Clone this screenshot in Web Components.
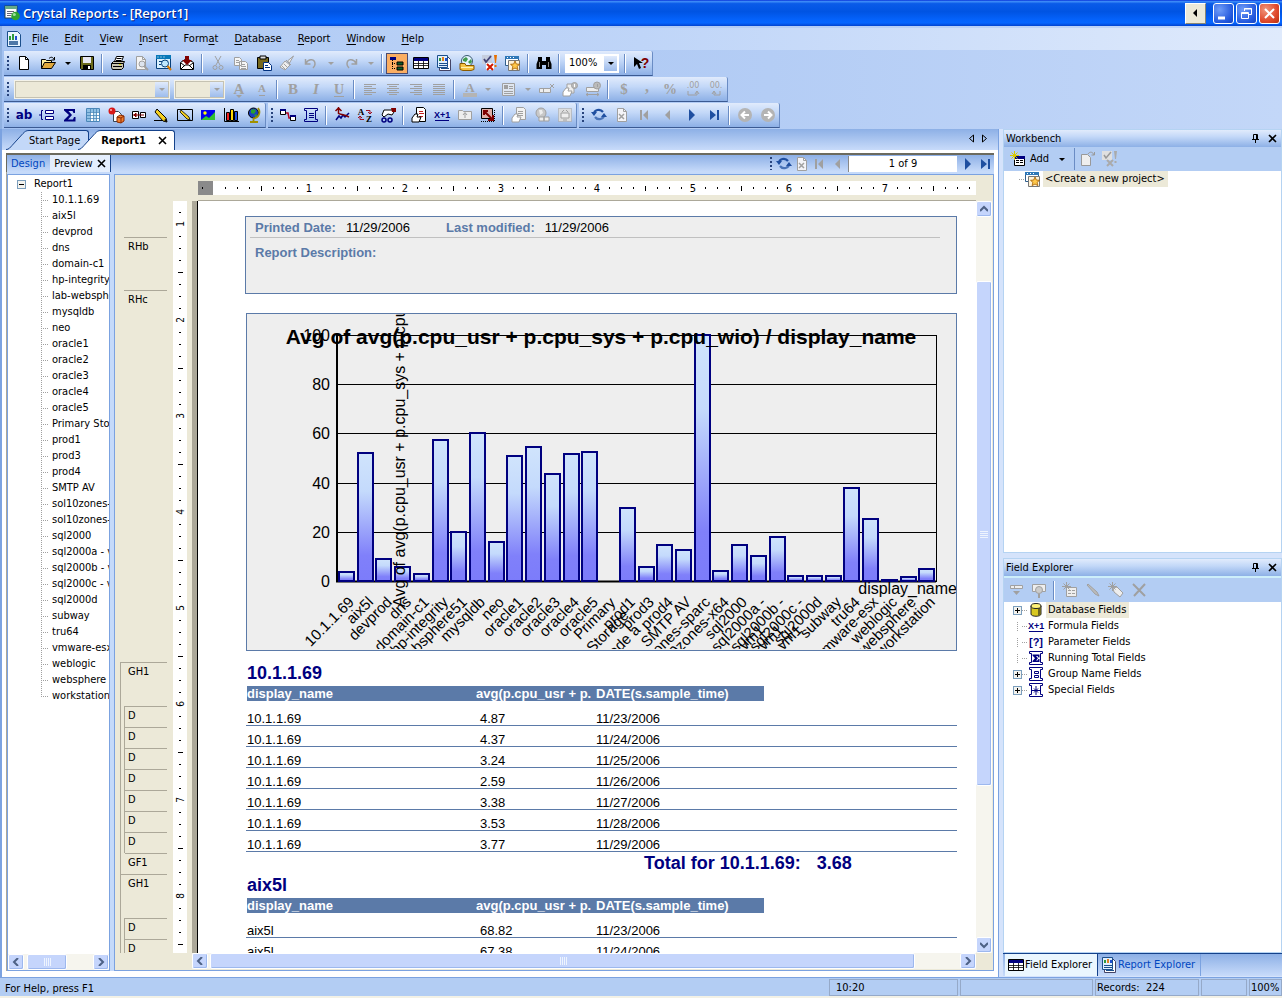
<!DOCTYPE html>
<html lang="en">
<head>
<meta charset="utf-8">
<title>Crystal Reports - [Report1]</title>
<style>
	html, body {
		height: 100%;
		margin: 0;
	}
	body {
		--navy: #00007f;
		--steel: #5b7aa8;
		--face: #ece9d8;
		--shadow: #aca899;
		--base: #b3cdf3;
		--edge: #7ba2e0;
		--dark: #15428b;
		--bar: linear-gradient(#e1ebfc, #c3d8f8 40%, #8db0e6);
		--strip: linear-gradient(#8db0e6, #c8dbfa);
		font: 11px/16px "DejaVu Sans Condensed", "Noto Sans", sans-serif;
		color: #000;
		overflow: hidden;
	}
</style>
</head>
<body>
<report-app></report-app>

<script>
const page = (fill, line) => `<path d="M3.5 1.5h6l3 3v10h-9z" fill="${fill}" stroke="${line}"/><path d="M9.5 1.5v3h3" fill="none" stroke="${line}"/>`
const lines = (rows, color) => rows.map(([x, y, w]) => `<rect x="${x}" y="${y}" width="${w}" height="1" fill="${color}"/>`).join('')
const letter = (text, color, size = 13, extra = '') => `<text x="8" y="13" text-anchor="middle" font-family="Liberation Serif, serif" font-weight="bold" font-size="${size}" fill="${color}" ${extra}>${text}</text>`
const G = '#a0a0a0'
const N = '#00007f'
const B = '#1f4fa0'
const scroll = `<path d="M3.5 3.500h-2v-2h13v2h-2M3.500 3.500v9M12.500 3.500v9M3.500 12.500h-2v2h13v-2h-2" fill="none" stroke="${N}"/>`
const hand = color => `<path d="M1 15v-4l3-4 3 0-1 3h4l-2 5z" fill="#fff" stroke="${color}"/>`
const spark = color => `<path d="M4.500 0v9M0 4.500h9M1.500 1.500l6 6M7.500 1.500l-6 6" stroke="${color}"/>`
const star = '<path d="M10 6l1.300 3 3.200.3-2.400 2.100.8 3.200L10 13l-2.900 1.600.8-3.200L5.500 9.300l3.200-.3z" fill="#ffc84a" stroke="#a05a00" stroke-width=".8"/>'

const icons = {
	app: '<rect x="1" y="1" width="12" height="12" fill="#fff" stroke="#245"/><rect x="1" y="1" width="12" height="3" fill="#6a8"/><path d="M3 6.500h7M3 8.500h5M3 10.500h4" stroke="#667"/><circle cx="11.500" cy="11" r="4.300" fill="#2fa32f"/><circle cx="10.300" cy="9.600" r="1.500" fill="#9fe09f"/>',
	menudoc: '<path d="M1.500.5h10l3 3v12h-13z" fill="#e8f4ff" stroke="#1b4f8c"/><path d="M3 9h2V5H3z" fill="#2f9a3f"/><path d="M6 9h2V3H6z" fill="#2f9a3f"/><path d="M9 9h2V5H9z" fill="#1f4fd0"/><path d="M3 11h9M3 13h9" stroke="#1b4f8c" stroke-width="1.400"/>',
	new: page('#fff', '#000'),
	open: '<path d="M1.500 13.500v-9h4l1 1h5v2" fill="#fff0a0" stroke="#000"/><path d="M1.500 13.500l3-6h11l-4 6z" fill="#e0a83c" stroke="#000"/><path d="M9 3.500c2-2 4-1.500 5 1M14.500 2v3h-3" fill="none" stroke="#000"/>',
	save: '<path d="M1.500 1.500h13v13h-12l-1-1z" fill="#6b6b1c" stroke="#000"/><path d="M4 2h8v6H4z" fill="#e8e8f4"/><path d="M4 10h8v5H4z" fill="#000"/><path d="M9 11h2v3H9z" fill="#fff"/>',
	print: '<path d="M4.500 6.500l2-5h7l-2 5z" fill="#fff" stroke="#000"/><path d="M6.500 3.500h5M6 5.500h5" stroke="#000"/><path d="M1.500 8.500l2-2h11l-1 2v4l-2 2h-9l-1-2z" fill="#c8c4b0" stroke="#000"/><path d="M1.500 8.500h12M3 11.500h9" stroke="#000"/><path d="M9 9.500h2" stroke="#dd0"/>',
	preview: page('#f4f4f4', G) + `<circle cx="9" cy="9" r="3" fill="#dde4ee" stroke="${G}"/><path d="M11 11l4 4" stroke="${G}" stroke-width="2"/>`,
	htmlprev: '<path d="M.5.5h14v13H.5z" fill="#d8f0ff" stroke="#06407c"/><path d="M0 0h15v4H0z" fill="#0878b8"/><path d="M1.500 2h1m2 0h1m2 0h1" stroke="#fff"/><path d="M3 6.500h3M3 9.500h2" stroke="#06407c"/><circle cx="9" cy="8.500" r="3.500" fill="#bfe8ff" stroke="#06407c"/><path d="M11.500 11l3.500 4" stroke="#d87800" stroke-width="2"/>',
	export: '<path d="M1.500 7.500l6-4 7 4v7h-13z" fill="#fff" stroke="#000"/><path d="M2 14l4-4h4l4 4M2 8l4 3M14 8l-4 3" fill="none" stroke="#000"/><path d="M6 1h4v4h3l-5 5-5-5h3z" fill="#800000"/>',
	cut: `<path d="M5 1l5 9M11 1l-5 9" stroke="${G}"/><circle cx="5" cy="12.500" r="2" fill="none" stroke="${G}"/><circle cx="11" cy="12.500" r="2" fill="none" stroke="${G}"/>`,
	copy: `<path d="M1.500 2.500h5l2 2v6h-7zM6.500 6.500h6l2 2v6h-8z" fill="#f6f6f6" stroke="${G}"/>` + lines([[3, 5, 3], [3, 7, 3], [8, 9, 4], [8, 11, 5], [8, 13, 5]], G),
	paste: '<path d="M1.500 2.500h11v11h-11z" fill="#76681c" stroke="#000"/><path d="M4 1h6v3H4z" fill="#ddd" stroke="#000"/><path d="M7.500 7.500h5l3 3v5h-8z" fill="#fff" stroke="#00307f"/>' + lines([[9, 10, 3], [9, 12, 5]], '#00307f'),
	brush: `<path d="M14.500 1l-6 5 2 2zM7 5l5 5M6 6l-5 6 5 3 5-5z" fill="#eee" stroke="${G}"/><path d="M3 11l3 3M5 9l3 3" stroke="${G}"/>`,
	undo: `<path d="M2.500 4v5h5M3 8c3-5 9-4 9 1 0 2-1 3-2 4" fill="none" stroke="${G}" stroke-width="1.500"/>`,
	redo: `<path d="M13.500 4v5h-5M13 8c-3-5-9-4-9 1 0 2 1 3 2 4" fill="none" stroke="${G}" stroke-width="1.500"/>`,
	tree: `<path d="M1 2h6v3H1z" fill="${N}"/><path d="M3.500 5v9M3 8.500h4M3 13.500h4" stroke="#000" fill="none" stroke-dasharray="1 1"/><path d="M8 7h6v3H8zM8 12h6v3H8z" fill="#0a5c2c" stroke="#000"/>`,
	table: `<path d="M.5 2.500h15v11H.5z" fill="#fff" stroke="#000"/><path d="M1 3h14v3H1z" fill="${N}"/><path d="M1 8.500h14M1 10.500h14M5.500 6v8M10.500 6v8" stroke="#000" stroke-width=".8"/>`,
	report: '<path d="M3.500 1.500h8l3 3v11h-11z" fill="#fff" stroke="#446"/><path d="M1.500.5h10v12h-10z" fill="#dff0ff" stroke="#1b4f8c"/><path d="M3 6h2V3H3z" fill="#2f9a3f"/><path d="M6 6h2V2H6z" fill="#e08020"/><path d="M9 6h2V3H9z" fill="#1f4fd0"/><path d="M3 8.500h8M3 10.500h8M5 13.500h8" stroke="#1b4f8c"/>',
	globe: '<circle cx="8" cy="6" r="5.500" fill="#e4f4ff" stroke="#3a5a70"/><path d="M4 4l3-2 2 2-2 3-3-1zM9 7l3-3 1 3-2 2z" fill="#3f9a4f"/><path d="M1 8.500h5l1 2h8v4l-3 1H4l-3-1z" fill="#f5c343" stroke="#8a5a00"/><path d="M2 12.500h12" stroke="#fff2b0"/>',
	check: '<path d="M0 0h10v9H0z" fill="#c6cede"/><path d="M2 4l2 3 5-6" fill="none" stroke="#447" stroke-width="1.800"/><path d="M4 8h8v7H4z" fill="#fff"/><path d="M5 9l6 6m0-6l-6 6" stroke="#d01800" stroke-width="2"/><path d="M12 0h3l-1 8h-1zM12.500 10h2v2h-2z" fill="#e87000"/>',
	favreport: '<path d="M.5 1.500h13v9H.5z" fill="#fff" stroke="#315f8c"/><path d="M0 1h14v3H0z" fill="#2f78b8"/><path d="M2 2.500h1m2 0h1m2 0h1" stroke="#fff"/><path d="M3.500 5.500h11v10h-11z" fill="#fff3d8" stroke="#777"/>' + star,
	binoc: '<path d="M2 2h4v4h4V2h4v3l1.500 4v5H10v-4H6v4H.5V9L2 5z" fill="#000"/><path d="M3.500 7v5M12.500 7v5" stroke="#8a8a8a"/>',
	help: '<path d="M1 2v10l3-3 2 5 2-1-2-5h4z" fill="#000"/>' + '<text x="12" y="13" text-anchor="middle" font-family="Liberation Sans, sans-serif" font-weight="bold" font-size="14" fill="#800000">?</text>',
	grow: letter('A', G, 15) + `<path d="M5 14h6l-3 3z" fill="${G}"/>`,
	shrink: `<text x="8" y="11" text-anchor="middle" font-family="Liberation Serif, serif" font-weight="bold" font-size="11" fill="${G}">A</text><path d="M5 14.500h6" stroke="${G}"/>`,
	bold: letter('B', G, 15),
	italic: letter('I', G, 15, 'font-style="italic"'),
	under: letter('U', G, 14) + `<path d="M3 15.500h10" stroke="${G}"/>`,
	left: lines([[2, 3, 12], [2, 5, 8], [2, 7, 12], [2, 9, 8], [2, 11, 12], [2, 13, 8]], G),
	center: lines([[2, 3, 12], [4, 5, 8], [2, 7, 12], [4, 9, 8], [2, 11, 12], [4, 13, 8]], G),
	right: lines([[2, 3, 12], [6, 5, 8], [2, 7, 12], [6, 9, 8], [2, 11, 12], [6, 13, 8]], G),
	justify: lines([[2, 3, 12], [2, 5, 12], [2, 7, 12], [2, 9, 12], [2, 11, 12], [2, 13, 12]], G),
	fontcolor: `<text x="8" y="11" text-anchor="middle" font-family="Liberation Serif, serif" font-weight="bold" font-size="13" fill="${G}">A</text><path d="M1 12h14v4H1z" fill="#b4b4b4"/>`,
	box: `<path d="M2.500 2.500h12v12h-12z" fill="#dfe6f0" stroke="${G}"/><path d="M4 4h4v4H4z" fill="${G}"/>` + lines([[9, 5, 4], [9, 7, 4], [4, 10, 9], [4, 12, 9]], G),
	suppress: `<path d="M.5 7.500h11v4H.5z" fill="#eee" stroke="${G}"/><path d="M11 3l4 4m0-4l-4 4M4.500 8v3" stroke="${G}"/>`,
	lockformat: `<path d="M5 3h7v9H5z" fill="#eee" stroke="${G}"/>${hand(G)}<circle cx="12.500" cy="4.500" r="3" fill="#bbb" stroke="${G}"/><path d="M12.500 3v3" stroke="#fff"/>`,
	locksize: `<path d="M1.500 6.500h12v4h-12z" fill="#eee" stroke="${G}"/><circle cx="12" cy="4.500" r="3.500" fill="#bbb" stroke="${G}"/><path d="M1 13.500h13M3 12l-2 1.500 2 1.500M12 12l2 1.500-2 1.500M12.500 3v3" stroke="${G}" fill="none"/>`,
	currency: letter('$', G, 15),
	thousands: `<text x="8" y="11" text-anchor="middle" font-family="Liberation Serif, serif" font-weight="bold" font-size="16" fill="${G}">,</text>`,
	percent: letter('%', G, 14),
	moredec: `<text x="8" y="7" text-anchor="middle" font-family="DejaVu Sans, sans-serif" font-size="8" fill="${G}">.00</text><path d="M3 10v4h9v-3M10 13l2-3 2 3" stroke="${G}" fill="none"/>`,
	lessdec: `<text x="8" y="7" text-anchor="middle" font-family="DejaVu Sans, sans-serif" font-size="8" fill="${G}">00.</text><path d="M12 10v4H6v-3M4 13l2-3 2 3" stroke="${G}" fill="none"/>`,
	textobj: `<text x="8" y="12" text-anchor="middle" font-family="DejaVu Sans, sans-serif" font-weight="bold" font-size="12" fill="${N}">ab</text>`,
	group: `<path d="M6.500 3.500h8v3h-8zM6.500 9.500h8v3h-8z" fill="#fff" stroke="${N}"/><path d="M4 3.500H2.500v9H4M2 8H0" fill="none" stroke="${N}"/>`,
	sigma: `<path d="M2 2h11v4h-1.500L10.500 4H6.500l3.500 4-4 4.500h5L12 10h1.500v4.500H2V13l5-5-5-4.500z" fill="${N}"/>`,
	crosstab: '<path d="M1.500 1.500h13v13h-13z" fill="#fff" stroke="#4a86b8"/><path d="M2 2h12v3H2zM2 2h3v12H2z" fill="#8fc0e4"/><path d="M9 5h3v9H9z" fill="#bfe0f4"/><path d="M2 5.500h12M2 8.500h12M2 11.500h12M5.500 2v12M8.500 2v12M11.500 2v12" stroke="#4a86b8" stroke-width=".8"/>',
	olap: '<path d="M5.500 4.500h5l3 3v7h-8z" fill="#fff" stroke="#345"/><circle cx="4" cy="4" r="3.500" fill="#d81818"/><circle cx="3" cy="3" r="1" fill="#ffb0b0"/><path d="M9 10l3-2 4 1v5l-3 2-4-1z" fill="#f08030" stroke="#8a2800"/><path d="M9 10l4 1 3-2M13 11v5" stroke="#8a2800" fill="none"/>',
	subreport: '<path d="M1.500 4.500h6v7h-6zM9.500 5.500h5v5h-5z" fill="#fff" stroke="#000"/><path d="M2 8h11M5 6L3 8l2 2z" stroke="#800000" fill="#800000"/>',
	line: '<path d="M0 13.500h8" stroke="#000"/><path d="M3 2l9 9 1 4-4-1-8-9z" fill="#f5d020" stroke="#000"/><path d="M10 13l3 2-1-3z" fill="#000"/>',
	boxpen: '<path d="M.5 2.500h15v11H.5z" fill="none" stroke="#000"/><path d="M4 3l8 7 1 3-3-1-7-7z" fill="#f5d020" stroke="#000" stroke-width=".8"/>',
	picture: '<path d="M1 3h14v10H1z" fill="#0000f0"/><path d="M1 13l5-4 3 2 6-6v8z" fill="#30c030"/><circle cx="5" cy="6" r="1.700" fill="#ff0"/>',
	chart: '<path d="M1.500 1v13.500H16" fill="none" stroke="#000"/><path d="M3.500 5.500h3v8h-3z" fill="#f02020" stroke="#000"/><path d="M7.500 2.500h3v11h-3z" fill="#ffd800" stroke="#000"/><path d="M11.500 4.500h3v9h-3z" fill="#2050e0" stroke="#000"/>',
	map: '<circle cx="7.500" cy="6" r="5" fill="#1a3fc0" stroke="#000"/><path d="M5 3l3-1 2 2-2 3-3-1zM8 8l3-1-1 3z" fill="#28a030"/><path d="M12 1c3 4 1 10-5 10.500M7.500 12v2M4 15h8" stroke="#a09000" stroke-width="1.800" fill="none"/>',
	dblink: `<path d="M.5 2.500h5v5h-5zM10.500 8.500h5v5h-5z" fill="#fff" stroke="#000"/><path d="M0 2h6v2H0zM10 8h6v2h-6z" fill="${N}"/><path d="M6 6h2l1 5h1" stroke="#b00020" fill="none" stroke-width="1.500"/>`,
	section: scroll + lines([[6, 6, 5], [6, 8, 5], [6, 10, 5]], N),
	trend: `<path d="M2 13l3-4 2 2 2-3 2 2 4-4" stroke="${N}" stroke-width="1.500" fill="none"/><path d="M4.500 0v6M1.500 4l3-3 3 3M4 6c2 2 5 1 11 4" stroke="#800000" stroke-width="1.500" fill="none"/>`,
	sort: '<text x="4" y="8" text-anchor="middle" font-family="Liberation Serif, serif" font-weight="bold" font-size="9">A</text><text x="12" y="15" text-anchor="middle" font-family="Liberation Serif, serif" font-weight="bold" font-size="9">Z</text><path d="M9 3.500h4v3M11 5l2 2 2-2M7 12.500H3v-3M1 11l2-2 2 2" stroke="#a01020" fill="none"/>',
	groupsort: `<path d="M4 3h8l2 2-2 3-4-1-4 3-2-2z" fill="#fff" stroke="#000"/><path d="M11 1h5v4h-4z" fill="#800000"/><circle cx="4" cy="13" r="2" fill="none" stroke="${N}" stroke-width="1.500"/><circle cx="10" cy="13" r="2" fill="none" stroke="${N}" stroke-width="1.500"/>`,
	template: '<path d="M5.500.5h7l2 2v12h-9z" fill="#fff" stroke="#000"/>' + lines([[8, 4, 4], [8, 6, 5], [8, 9, 4]], '#c02020') + hand('#000'),
	formula: `<text x="8" y="11" text-anchor="middle" font-family="Liberation Sans, sans-serif" font-weight="bold" font-size="9" fill="${N}">X+1</text><path d="M1 13.500h14" stroke="${N}"/>`,
	folderup: `<path d="M1.500 12.500v-9h4l1 1h8v8z" fill="#eee" stroke="${G}"/><path d="M8 11V6M6 8l2-2.500L10 8" stroke="${G}" fill="none"/>`,
	arrowbox: '<path d="M1.500 1.500h11v10h-11z" fill="#e0b0a8" stroke="#000"/><path d="M4 4l8 8M4 8V4h4M13 8v5H8" stroke="#800000" stroke-width="2" fill="none"/><path d="M1 14.500h13M14.500 3v11" stroke="#000" stroke-dasharray="1 1"/>',
	handdoc: `<path d="M5.500.5h7l2 2v10h-9z" fill="#f2f2f2" stroke="${G}"/>` + lines([[7, 4, 5], [7, 6, 5], [7, 8, 5]], G) + hand(G),
	weblink: `<circle cx="7" cy="6" r="5" fill="#c8c8c8" stroke="${G}"/><path d="M5 3l3 0 1 3-3 2z" fill="#eee"/><path d="M5 10h5v4H5zM10 10h5v4h-5z" fill="#eee" stroke="${G}"/>`,
	dotsel: `<path d="M1.500 1.500h13v13h-13z" fill="#ddd" stroke="${G}" stroke-dasharray="1 1"/><path d="M4 6h8v5H4zM7 3l-2 2M9 3l2 2M6 13h4" stroke="${G}" fill="#eee"/>`,
	refresh: `<path d="M3 7c0-4 6-6 9-2" fill="none" stroke="${B}" stroke-width="2.200"/><path d="M13 8c0 4-6 6-9 2" fill="none" stroke="#4a74b8" stroke-width="2.200"/><path d="M0 5h6L3 9zM16 10h-6l3-4z" fill="${B}"/>`,
	stop: page('#f4f4f8', G) + `<path d="M5 7l5 5m0-5l-5 5" stroke="${G}" stroke-width="1.500"/>`,
	first: `<path d="M3 3h2v10H3zM11 3v10L6 8z" fill="${G}"/>`,
	prev: `<path d="M10 3v10L5 8z" fill="${G}"/>`,
	next: `<path d="M6 2v12l6-6z" fill="${B}"/>`,
	last: `<path d="M11 3h2v10h-2zM4 3v10l6-5z" fill="${B}"/>`,
	back: '<circle cx="8" cy="8" r="7" fill="#b4b4b4"/><path d="M12 8H5M8 4.500L4.500 8 8 11.500" stroke="#fff" stroke-width="2" fill="none"/>',
	forward: '<circle cx="8" cy="8" r="7" fill="#b4b4b4"/><path d="M4 8h7M8 4.500l3.500 3.500L8 11.500" stroke="#fff" stroke-width="2" fill="none"/>',
	add: '<path d="M4.500 5.500h10v9h-10z" fill="#fff" stroke="#000"/><path d="M4 5h11v3H4z" fill="#00007f"/>' + lines([[6, 9, 3], [10, 9, 3], [6, 11, 3], [10, 11, 3]], '#000') + spark('#d8c800'),
	newitem: '<path d="M2.500 3.500h6l3 3v8h-9z" fill="#eee" stroke="#999"/><path d="M9 3c2-3 5-2 6 1M15.500 1v3h-3" fill="none" stroke="#999"/>',
	checkgray: '<path d="M0 0h10v9H0z" fill="#e0e0e0"/><path d="M2 4l2 3 5-6" fill="none" stroke="#999" stroke-width="1.500"/><path d="M5 9l6 6m0-6l-6 6" stroke="#aaa" stroke-width="2"/><path d="M12 0h3l-1 8h-1zM12.500 10h2v2h-2z" fill="#aaa"/>',
	insfield: `<path d="M2.500 3.500h12v3h-12zM6.500 4v2" fill="#eee" stroke="${G}"/><path d="M5 9h7l-3.500 4z" fill="${G}"/>`,
	browse: `<path d="M1.500 2.500h13v7h-13z" fill="#eee" stroke="${G}"/><circle cx="8" cy="8" r="3.500" fill="#ccc" stroke="${G}"/><path d="M8 12v4" stroke="${G}" stroke-width="2"/>`,
	newfield: `<path d="M4.500 5.500h10v9h-10z" fill="#eee" stroke="${G}"/>` + lines([[6, 8, 3], [10, 8, 3], [6, 11, 3], [10, 11, 3]], G) + spark(G),
	edit: `<path d="M3 2l9 8 2 4-4-2-8-9z" fill="#bbb" stroke="${G}"/>`,
	rename: `<path d="M5 6l4-1 6 6-3 4-6-5z" fill="#eee" stroke="${G}"/>` + spark(G),
	delete: `<path d="M2 2l12 12M14 2L3 14" stroke="${G}" stroke-width="2"/>`,
	database: '<path d="M3 4v8c0 3 10 3 10 0V4z" fill="#d8c820" stroke="#222"/><path d="M10 6v8l3-2V4z" fill="#6b6420"/><ellipse cx="8" cy="4" rx="5" ry="2.500" fill="#fff27a" stroke="#222"/>',
	param: `<text x="8" y="12" text-anchor="middle" font-family="Liberation Sans, sans-serif" font-weight="bold" font-size="11" fill="${N}">[?]</text>`,
	runtotal: scroll + `<path d="M4.500 4.500h7v3h-1l-1-1.500H8l2 2.200L8 10.500h1.500l1-1.500h1v3h-7v-1l2.500-2.800L4.500 5.500z" fill="${N}"/>`,
	groupname: scroll + `<path d="M6.500 5.500h4v2h-4zM6.500 9.500h4v2h-4z" fill="#fff" stroke="${N}"/>`,
	special: scroll + `<path d="M8 4v9M4 8.500h8M6 6.500l4 4M10 6.500l-4 4" stroke="${N}" fill="none"/>`
}

/* shared base: shadow root, styles and markup in one go */
class Part extends HTMLElement {
	connectedCallback() {
		if (this.shadowRoot) return
		this.attachShadow({ mode: 'open' }).innerHTML = `
			<style>
				:host { display: block; box-sizing: border-box; }
				*, ::before, ::after { box-sizing: border-box; }
				button, input, select { font: inherit; color: inherit; margin: 0; padding: 0; border: 0; background: none; border-radius: 0; }
				ul { list-style: none; margin: 0; padding: 0; }
				${this.css()}
			</style>${this.html()}`
	}
	css() { return '' }
	html() { return '<slot></slot>' }
}

class ReportIcon extends Part {
	css() {
		return `
			:host { display: inline-flex; flex: none; width: 16px; height: 16px; }
			svg { width: 16px; height: 16px; display: block; overflow: visible; }
		`
	}
	html() {
		return `<svg viewBox="0 0 16 16" aria-hidden="true">${icons[this.getAttribute('name')] || ''}</svg>`
	}
}

class TitleBar extends Part {
	css() {
		return `
			:host {
				display: flex; flex: none; align-items: center; height: 26px; padding: 0 2px 0 4px; gap: 3px;
				background: linear-gradient(#0831d9, #3c8cf8 6%, #0a5be8 14%, #0054e3 45%, #0462fb 75%, #0666ff 88%, #0143cf);
			}
			h1 { flex: 1; margin: 0; font: 600 13px/20px "Open Sans", sans-serif; color: #fff; text-shadow: 1px 1px #0a1f7a; }
			button {
				width: 21px; height: 21px; border: 1px solid #fff; border-radius: 3px; color: #fff;
				background: radial-gradient(circle at 30% 30%, #6f9cf8, #2257dc 70%, #1544c0);
				display: grid; place-items: center;
			}
			.tools { display: flex; gap: 2px; }
			.dock { background: var(--face); color: #000; border-radius: 0; border-color: #fff #8a8672 #8a8672 #fff; margin-right: 5px; }
			.close { background: radial-gradient(circle at 30% 30%, #f0967c, #e0492c 60%, #b8300f); }
			svg { width: 15px; height: 15px; fill: none; stroke: currentColor; }
		`
	}
	html() {
		return `
			<report-icon name="app"></report-icon>
			<h1><slot></slot></h1>
			<div class="tools">
				<button class="dock" aria-label="Dock"><svg viewBox="0 0 15 15"><path d="M9 3v8L5 7z" fill="currentColor" stroke="none"/></svg></button>
				<button aria-label="Minimize"><svg viewBox="0 0 15 15"><path d="M2 12h7" stroke-width="3"/></svg></button>
				<button aria-label="Restore"><svg viewBox="0 0 15 15"><path d="M5.500 5V2.500h7v6H10M5 3h8M2.500 6.500h7v6h-7zM2 7.500h8"/></svg></button>
				<button class="close" aria-label="Close"><svg viewBox="0 0 15 15"><path d="M3 3l9 9m0-9l-9 9" stroke-width="2"/></svg></button>
			</div>`
	}
}

class MenuBar extends Part {
	css() {
		return `
			:host { display: flex; align-items: center; height: 22px; padding-left: 4px; background: linear-gradient(90deg, #a9c6f3, #bfd5f8 50%, #dfeafc); }
			nav { display: flex; padding-left: 2px; }
			button { padding: 0 8px; height: 20px; }
			u { text-underline-offset: 2px; }
		`
	}
	html() {
		const items = ['<u>F</u>ile', '<u>E</u>dit', '<u>V</u>iew', '<u>I</u>nsert', 'Form<u>a</u>t', '<u>D</u>atabase', '<u>R</u>eport', '<u>W</u>indow', '<u>H</u>elp']
		return `<report-icon name="menudoc"></report-icon><nav>${items.map(item => `<button>${item}</button>`).join('')}</nav>`
	}
}

/* items: icon name, "|" for a separator, "v" for a drop arrow, "-v" for a disabled one */
class ToolBar extends Part {
	css() {
		return `
			:host {
				display: flex; align-items: center; height: 25px;
				background: var(--bar); border-right: 1px solid #6a8cc4; border-bottom: 1px solid #3b5a92; border-radius: 0 2px 0 0;
			}
			:host([flat]) { background: none; border: 0; }
			.grip { width: 2px; height: 15px; margin: 0 3px; background: repeating-linear-gradient(#27437c 0 2px, transparent 2px 4px); }
			:host([flat]) .grip { display: none; }
			button { width: 23px; height: 23px; display: grid; place-items: center; }
			.wide { width: 26px; }
			.active { width: 22px; height: 21px; margin-right: 1px; background: #fbae62; border: 1px solid #4b4b6f; }
			.arrow { width: 14px; }
			.arrow::before { content: ""; border: 3px solid transparent; border-top-color: #000; border-bottom: 0; }
			.off::before { border-top-color: ${G}; }
			i { width: 8px; height: 19px; padding-left: 3px; }
			i::before { content: ""; display: block; width: 2px; height: 100%; background: #6a8cc4; border-right: 1px solid #fff; }
		`
	}
	html() {
		const items = (this.getAttribute('items') || '').split(' ').map(item => {
			if (item === '|') return '<i></i>'
			if (item === 'v') return '<button class="arrow" aria-label="More"></button>'
			if (item === '-v') return '<button class="arrow off" aria-label="More"></button>'
			if (item === 'ZOOM') return '<drop-box wide="54" value="100%" label="Zoom"></drop-box>'
			if (item === 'FONT') return '<drop-box wide="156" value="" label="Font" disabled></drop-box><drop-box wide="51" value="" label="Font size" disabled></drop-box>'
			const [name, kind] = item.split(':')
			return `<button class="${kind || ''}" aria-label="${name}"><report-icon name="${name}"></report-icon></button>`
		}).join('')
		return `<span class="grip"></span>${items}<slot></slot>`
	}
}

class DropBox extends Part {
	css() {
		return `
			:host { width: ${this.getAttribute('wide')}px; height: 19px; display: grid; margin: 0 2px; border: 1px solid #fff; background: #fff; }
			:host([disabled]) { background: var(--face); border-color: #f4f3ea; outline: 1px solid #c5c2b2; outline-offset: -2px; }
			select, .arrow { grid-area: 1 / 1; }
			select { appearance: none; width: 100%; padding-left: 3px; opacity: 1; }
			.arrow { justify-self: end; width: 13px; margin: 1px; background: linear-gradient(#e1ebfc, #9dbcec); pointer-events: none; display: grid; place-items: center; }
			.arrow::before { content: ""; border: 3px solid transparent; border-top-color: ${this.hasAttribute('disabled') ? G : '#000'}; border-bottom: 0; }
		`
	}
	html() {
		return `<select aria-label="${this.getAttribute('label')}" ${this.hasAttribute('disabled') ? 'disabled' : ''}><option>${this.getAttribute('value')}</option></select><span class="arrow"></span>`
	}
}

class DocTab extends Part {
	css() {
		return `
			:host { display: flex; height: 20px; margin-left: -11px; --fill: #c3d8f8; }
			:host([selected]) { --fill: #fff; font-weight: bold; }
			svg { width: 23px; height: 20px; display: block; }
			.body { display: flex; align-items: center; gap: 12px; padding-right: 6px; background: var(--fill); border: solid var(--dark); border-width: 1px 1px 0 0; border-radius: 0 3px 0 0; }
			:host(:not([selected])) .body { padding-right: 8px; }
			button { height: 18px; }
			.x { width: 10px; height: 10px; display: grid; }
			.x svg { width: 9px; height: 9px; }
		`
	}
	html() {
		return `
			<svg viewBox="0 0 23 20" aria-hidden="true"><path d="M0 19.500c3 0 4-2 6-4l11-12c2-2 3-3 6-3V20H0z" style="fill: var(--fill)"/><path d="M0 19.500c3 0 4-2 6-4l11-12c2-2 3-3 6-3" fill="none" stroke="#15428b"/></svg>
			<div class="body"><button><slot></slot></button>${this.hasAttribute('selected') ? '<button class="x" aria-label="Close"><svg viewBox="0 0 9 9"><path d="M1 1l7 7m0-7L1 8" stroke="#000" stroke-width="1.600"/></svg></button>' : ''}</div>`
	}
}

/* parts: shares of the track before, under and after the thumb */
class ScrollBar extends Part {
	css() {
		const vertical = this.hasAttribute('vertical')
		return `
			:host { display: flex; flex-direction: ${vertical ? 'column' : 'row'}; ${vertical ? 'width: 16px' : 'height: 16px'}; flex: none; background: #f6f5ee; gap: 1px; }
			button { width: 16px; height: 16px; flex: none; border-radius: 2px; background: #c5d5fc; border: 1px solid #fff; box-shadow: inset -1px -1px #9db8ee; display: grid; place-items: center; }
			.thumb { ${vertical ? 'width: 16px; height: auto' : 'width: auto; height: 16px'}; }
			svg { width: 8px; height: 8px; fill: none; stroke: #4d6185; stroke-width: 2; }
			.thumb svg { stroke: #eef4fe; stroke-width: 1; }
		`
	}
	html() {
		const vertical = this.hasAttribute('vertical')
		const [before, thumb, after] = this.getAttribute('parts').split(' ')
		const arrow = d => `<svg viewBox="0 0 8 8"><path d="${d}"/></svg>`
		return `
			<button aria-label="Back">${arrow(vertical ? 'M0 6l4-4 4 4' : 'M6 0L2 4l4 4')}</button>
			<span style="flex: ${before} 1 0px"></span>
			<button class="thumb" style="flex: ${thumb} 1 0px" aria-label="Thumb">${arrow(vertical ? 'M0 1.500h8M0 3.500h8M0 5.500h8M0 7.500h8' : 'M1.500 0v8M3.500 0v8M5.500 0v8M7.500 0v8')}</button>
			<span style="flex: ${after} 1 0px"></span>
			<button aria-label="Forward">${arrow(vertical ? 'M0 2l4 4 4-4' : 'M2 0l4 4-4 4')}</button>`
	}
}

const groups = ['10.1.1.69', 'aix5l', 'devprod', 'dns', 'domain-c1', 'hp-integrity', 'lab-websphere51', 'mysqldb', 'neo', 'oracle1', 'oracle2', 'oracle3', 'oracle4', 'oracle5', 'Primary Storage', 'prod1', 'prod3', 'prod4', 'SMTP AV', 'sol10zones-sparc', 'sol10zones-x64', 'sql2000', 'sql2000a - vm', 'sql2000b - vm', 'sql2000c - vm', 'sql2000d', 'subway', 'tru64', 'vmware-esx', 'weblogic', 'websphere', 'workstation']
const values = [3.5, 52, 9, 5.5, 3, 57.5, 20, 60, 16, 51, 54.5, 43.5, 51.5, 52.5, 0, 29.5, 5.5, 14.5, 12.5, 100, 4, 14.5, 10, 18, 2, 2, 2, 38, 25, .5, 1.5, 5]

class GroupTree extends Part {
	css() {
		return `
			:host { display: flex; flex-direction: column; background: #fff; overflow: hidden; padding-top: 1px; }
			.scroll { flex: 1; overflow: hidden; white-space: nowrap; }
			.root { display: flex; align-items: center; gap: 8px; padding-left: 9px; }
			.toggle { width: 9px; height: 9px; border: 1px solid #7b9ebd; background: linear-gradient(#000, #000) center / 5px 1px no-repeat #f4f3ee; }
			ul { margin-left: 33px; background: repeating-linear-gradient(${G} 0 1px, transparent 1px 2px) 0 0 / 1px calc(100% - 8px) no-repeat; }
			li { display: flex; align-items: center; gap: 3px; height: 16px; }
			li::before { content: ""; flex: none; width: 8px; height: 1px; background: repeating-linear-gradient(90deg, ${G} 0 1px, transparent 1px 2px); }
		`
	}
	html() {
		return `
			<div class="scroll">
				<div class="root"><button class="toggle" aria-label="Collapse"></button>Report1</div>
				<ul>${groups.map(name => `<li>${name}</li>`).join('')}</ul>
			</div>
			<scroll-bar parts="1 42 26"></scroll-bar>`
	}
}

class RulerBar extends Part {
	css() {
		return this.hasAttribute('vertical')
			? ':host { width: 14px; overflow: hidden; background: #fff; } svg { display: block; }'
			: ':host { height: 14px; overflow: hidden; background: linear-gradient(90deg, #8a8a8a 15px, #fff 15px); } svg { display: block; }'
	}
	html() {
		const vertical = this.hasAttribute('vertical')
		const start = vertical ? -73 : 15
		let marks = ''
		for (let n = 0; n < 96; n++) {
			const at = start + n * 12
			if (at < 0) continue
			if (n % 8 === 0) {
				if (n) marks += vertical
					? `<text transform="translate(11 ${at}) rotate(-90)" text-anchor="middle" font-size="10">${n / 8}</text>`
					: `<text x="${at}" y="11" text-anchor="middle">${n / 8}</text>`
				continue
			}
			const long = n % 4 === 0 ? 5 : 2
			marks += vertical
				? `<rect x="${7 - (long >> 1)}" y="${at}" width="${long}" height="1"/>`
				: `<rect x="${at}" y="${7 - (long >> 1)}" width="1" height="${long}"/>`
		}
		if (!vertical) marks += '<rect x="4" y="6" width="1" height="2"/>'
		return `<svg width="${vertical ? 14 : 1160}" height="${vertical ? 1100 : 14}" aria-hidden="true">${marks}</svg>`
	}
}

class SectionList extends Part {
	css() {
		return `
			:host { width: 57px; overflow: hidden; padding: 0 5px 0 5px; background: var(--face); }
			div { border-top: 1px solid var(--shadow); margin-left: 4px; padding-left: 4px; height: 21px; line-height: 17px; }
			.top { height: 36px; border: 0; }
			.b { height: 53px; }
			.c { height: 372px; }
			section { border: solid var(--shadow); border-width: 1px 0 0 1px; }
			section .gh { border: 0; height: 43px; padding-left: 3px; }
			section .gf { height: 21px; padding-left: 3px; }
			section .d { border-left: 1px solid var(--shadow); margin-left: 3px; padding-left: 3px; }
		`
	}
	html() {
		const d = '<div class="d">D</div>'
		return `<div class="top"></div><div class="b">RHb</div><div class="c">RHc</div>
			<section><div class="gh">GH1</div>${d.repeat(7)}<div class="gf">GF1</div></section>
			<section><div class="gh">GH1</div>${d.repeat(2)}</section>`
	}
}

/* half: half the length of the first line, the axis on which wrapped lines are centred */
const wrapped = {
	'Primary Storage': { rows: ['Primary', 'Storage', 'Node a'], half: 19 },
	'sql2000a - vm': { rows: ['sql2000a -', 'vm1'], half: 25 },
	'sql2000b - vm': { rows: ['sql2000b -', 'vm1'], half: 25 },
	'sql2000c - vm': { rows: ['sql2000c -', 'vm1'], half: 25 }
}

class UsageChart extends Part {
	css() {
		return `
			:host { height: 338px; max-width: 712px; border: 1px solid var(--steel); background: #eee; overflow: hidden; font: 16px "Liberation Sans", sans-serif; }
			svg { display: block; }
			.labels { font-size: 15px; }
		`
	}
	html() {
		const left = 90, base = 267, step = 599 / 32, unit = 2.46
		const grid = [0, 20, 40, 60, 80, 100].map(v => `
			<path d="M${left} ${Math.round(base - v * unit) + .5}h599" stroke="#000"/>
			<text x="83" y="${Math.round(base - v * unit) + 6}" text-anchor="end">${v}</text>`).join('')
		const bars = values.map((v, i) => {
			const x = Math.round(left + i * step) + 2
			const h = Math.round(v * unit)
			return `<rect x="${x}" y="${base - h}" width="15" height="${h}" fill="url(#bar)" stroke="${N}" stroke-width="2"/>`
		}).join('')
		const labels = groups.map((name, i) => {
			const x = Math.round(left + (i + .5) * step + 9)
			const wrap = wrapped[name]
			if (!wrap) return `<text transform="translate(${x} 289) rotate(-45)" text-anchor="end">${name}</text>`
			return wrap.rows.map((row, n) => `<text transform="translate(${x - wrap.half + n * 13} ${289 + wrap.half + n * 13}) rotate(-45)" text-anchor="middle">${row}</text>`).join('')
		}).join('')
		return `
			<svg width="710" height="335" role="img" aria-label="Average CPU by display name">
				<defs><linearGradient id="bar" x2="0" y2="1"><stop offset="0" stop-color="#d0e4fc"/><stop offset=".3" stop-color="#c4dafc"/><stop offset=".8" stop-color="#8080fa"/><stop offset="1" stop-color="#7c7cfa"/></linearGradient></defs>
				${grid}
				<path d="M${left} 21v247M${left - 1} 267.500h600" stroke="#000" stroke-width="2"/>
				<path d="M689.500 21v247" stroke="#000"/>
				${bars}
				<g class="labels">${labels}</g>
				<text transform="translate(158 293) rotate(-90)">Avg of avg(p.cpu_usr + p.cpu_sys + p.cpu</text>
				<text x="710" y="280" text-anchor="end">display_name</text>
				<text x="354" y="30" text-anchor="middle" font-size="21" font-weight="bold">Avg of avg(p.cpu_usr + p.cpu_sys + p.cpu_wio) / display_name</text>
			</svg>`
	}
}

class ReportGroup extends Part {
	css() {
		return `
			h2 { margin: 0 0 0 1px; height: 24px; font: bold 18px/22px "Liberation Sans", sans-serif; color: var(--navy); }
			table { width: 100%; table-layout: fixed; border-collapse: separate; border-spacing: 0; font: 13px/14px "Liberation Sans", sans-serif; }
			th, td { padding: 0; text-align: left; white-space: nowrap; overflow: hidden; }
			th { height: 15px; background: var(--steel); color: #fff; font-weight: bold; }
			th:first-child { border-left: 1px solid #fff; }
			th.rest { background: none; }
			.space td { height: 4px; border: 0; line-height: 0; }
			tbody td { height: 21px; border-bottom: 1px solid var(--steel); vertical-align: bottom; line-height: 12px; }
			tbody td:first-child { padding-left: 1px; }
			tbody td:nth-child(2) { padding-left: 4px; }
			tfoot td { height: 22px; font: bold 18px/20px "Liberation Sans", sans-serif; color: var(--navy); overflow: visible; }
			.total { display: flex; gap: 16px; padding-left: 48px; }
		`
	}
	html() {
		const name = this.getAttribute('name')
		const rows = this.getAttribute('values').split(' ').map((v, i) => `<tr><td>${name}</td><td>${v}</td><td>11/${23 + i}/2006</td><td></td></tr>`).join('')
		const total = this.getAttribute('total')
		return `
			<h2>${name}</h2>
			<table>
				<colgroup><col style="width: 230px"><col style="width: 120px"><col style="width: 168px"><col></colgroup>
				<thead>
					<tr><th>display_name</th><th>avg(p.cpu_usr + p.</th><th>DATE(s.sample_time)</th><th class="rest"></th></tr>
					<tr class="space"><td colspan="4"></td></tr>
				</thead>
				<tbody>${rows}</tbody>
				${total ? `<tfoot><tr><td></td><td></td><td colspan="2"><div class="total"><span>Total for ${name}:</span><span>${total}</span></div></td></tr></tfoot>` : ''}
			</table>`
	}
}

class ReportPage extends Part {
	css() {
		return `
			:host { background: #fff; overflow: hidden; padding: 15px 19px 0 47px; border-left: 1px solid #000; font: 13px/16px "Liberation Sans", sans-serif; }
			.info { height: 78px; border: 1px solid var(--steel); background: #eee; padding: 2px 16px 0 4px; margin-bottom: 19px; max-width: 712px; }
			.dates { display: flex; border-bottom: 1px solid silver; padding: 1px 0 1px 5px; }
			.dates p { margin: 0 36px 0 0; display: flex; gap: 10px; }
			b { color: var(--steel); }
			.info > b { display: block; padding: 7px 5px; }
			usage-chart { margin-left: 1px; margin-bottom: 11px; }
			report-group { max-width: 711px; margin-left: 1px; }
		`
	}
	html() {
		return `
			<div class="info">
				<div class="dates"><p><b>Printed Date:</b>11/29/2006</p><p><b>Last modified:</b>11/29/2006</p></div>
				<b>Report Description:</b>
			</div>
			<usage-chart></usage-chart>
			<report-group name="10.1.1.69" values="4.87 4.37 3.24 2.59 3.38 3.53 3.77" total="3.68"></report-group>
			<report-group name="aix5l" values="68.82 67.38"></report-group>`
	}
}

class ReportViewer extends Part {
	css() {
		return `
			:host { display: flex; flex-direction: column; min-width: 0; border: solid #fff; border-width: 3px 4px 6px 4px; background: var(--base); }
			.strip { display: flex; flex: none; align-items: stretch; height: 19px; background: var(--strip); border: solid #6b6a5e; border-width: 2px 0 0 1px; }
			.tab { padding: 0 4px; color: #0046c0; }
			button.tab { padding: 0 5px 0 4px; }
			.on { display: flex; align-items: center; gap: 4px; color: #000; background: #e4eefd; border-right: 1px solid var(--dark); }
			.x { width: 9px; height: 9px; display: grid; }
			.x svg { width: 9px; height: 9px; }
			.nav { margin-left: auto; display: flex; align-items: center; }
			.nav button { width: 18px; height: 16px; display: grid; place-items: center; }
			.nav .grip { width: 2px; height: 13px; background: repeating-linear-gradient(#27437c 0 2px, transparent 2px 4px); margin-right: 3px; }
			.nav input { width: 109px; height: 16px; background: #fff; text-align: center; border-left: 1px solid #888; margin: 0 1px; }
			.panes { flex: 1; min-height: 0; display: grid; grid-template: minmax(0, 1fr) / 103px minmax(0, 1fr); gap: 4px; padding-top: 2px; background: #c5dafa; border-left: 1px solid var(--shadow); }
			group-tree, .sheet { border: 1px solid var(--edge); min-height: 0; }
			.sheet { min-width: 0; display: grid; grid-template: 26px minmax(0, 1fr) 17px / 57px 20px minmax(0, 1fr) 17px; background: var(--face); }
			.hruler { grid-area: 1 / 3 / 2 / 4; padding-top: 6px; border-bottom: 1px solid var(--shadow); margin-left: 6px; }
			section-list { grid-area: 2 / 1; }
			ruler-bar[vertical] { grid-area: 2 / 2; margin-left: 1px; }
			.view { grid-area: 2 / 3; min-width: 0; min-height: 0; display: grid; grid-template: minmax(0, 1fr) / minmax(0, 1fr); border-left: 5px solid var(--shadow); }
			scroll-bar[vertical] { grid-area: 2 / 4; }
			.h { grid-area: 3 / 3; }
		`
	}
	html() {
		const btn = name => `<button aria-label="${name}"><report-icon name="${name}"></report-icon></button>`
		return `
			<div class="strip">
				<button class="tab">Design</button>
				<div class="tab on">Preview<button class="x" aria-label="Close"><svg viewBox="0 0 9 9"><path d="M1 1l7 7m0-7L1 8" stroke="#000" stroke-width="1.600"/></svg></button></div>
				<div class="nav"><span class="grip"></span>${btn('refresh')}${btn('stop')}${btn('first')}${btn('prev')}<input value="1 of 9" aria-label="Page">${btn('next')}${btn('last')}</div>
			</div>
			<div class="panes">
				<group-tree></group-tree>
				<div class="sheet">
					<div class="hruler"><ruler-bar></ruler-bar></div>
					<section-list></section-list>
					<ruler-bar vertical></ruler-bar>
					<div class="view"><report-page></report-page></div>
					<scroll-bar vertical parts="62 505 149"></scroll-bar>
					<scroll-bar class="h" parts="0 708 43"></scroll-bar>
				</div>
			</div>`
	}
}

class DockPanel extends Part {
	css() {
		return `
			:host { display: flex; flex-direction: column; min-height: 0; background: #fff; border: 1px solid #b5d3f2; }
			header { display: flex; align-items: center; gap: 8px; height: 17px; padding: 0 4px 0 2px; background: var(--bar); flex: none; }
			h2 { flex: 1; margin: 0; font: inherit; }
			header button { width: 9px; height: 11px; display: grid; place-items: center; }
			svg { width: 9px; height: 9px; fill: none; stroke: #000; }
			.tools { height: 24px; flex: none; background: var(--base); display: flex; align-items: center; }
			:host([inset]) .tools { border-top: 2px solid #cdeefa; height: 26px; }
			.body { flex: 1; min-height: 0; }
		`
	}
	html() {
		return `
			<header><h2>${this.getAttribute('heading')}</h2>
				<button aria-label="Pin"><svg viewBox="0 0 9 9"><path d="M2.500 5V.5h4V5M1 5.500h7M4.500 6v3M5.500 1v4"/></svg></button>
				<button aria-label="Close"><svg viewBox="0 0 9 9"><path d="M1 1l7 7m0-7L1 8" stroke-width="1.600"/></svg></button>
			</header>
			<div class="tools"><slot name="tools"></slot></div>
			<div class="body"><slot></slot></div>`
	}
}

class FieldNode extends Part {
	css() {
		return `
			:host { display: flex; align-items: center; height: 16px; padding-left: 9px; white-space: nowrap; }
			:host([bare]) { padding-left: 6px; }
			.mark { width: 9px; height: 9px; background: repeating-linear-gradient(${G} 0 1px, transparent 1px 2px) 4px 0 / 1px 100% no-repeat; }
			:host([plus]) .mark { border: 1px solid #7b9ebd; background: linear-gradient(#000, #000) center / 5px 1px no-repeat, linear-gradient(#000, #000) center / 1px 5px no-repeat, #f4f3ee; }
			.dots { width: 6px; height: 1px; background: repeating-linear-gradient(90deg, ${G} 0 1px, transparent 1px 2px); }
			.text { margin-left: 2px; padding: 0 3px 0 2px; }
			:host([selected]) .text { background: var(--face); }
			:host([bare]) .mark { background: none; }
		`
	}
	html() {
		return `<span class="mark"></span><span class="dots"></span><report-icon name="${this.getAttribute('icon')}"></report-icon><span class="text"><slot></slot></span>`
	}
}

class StatusBar extends Part {
	css() {
		return `
			:host { display: flex; flex: none; gap: 2px; height: 21px; padding: 1px 0 0 5px; background: var(--base); border-top: 1px solid var(--edge); border-bottom: 2px solid #f3f1e6; }
			span { line-height: 19px; white-space: pre; }
			.help { flex: 1; }
			.cell { border: 1px solid #95a9c8; line-height: 16px; padding-left: 1px; }
		`
	}
	html() {
		return `<span class="help">For Help, press F1</span>
			<span class="cell" style="width: 129px; padding-left: 6px">10:20</span>
			<span class="cell" style="width: 133px"></span>
			<span class="cell" style="width: 104px">Records:  224</span>
			<span class="cell" style="width: 46px"></span>
			<span class="cell" style="width: 33px">100%</span>`
	}
}

class ReportApp extends Part {
	css() {
		return `
			:host { display: flex; flex-direction: column; height: 100vh; background: #fff; }
			.top { flex: none; padding: 2px 0 1px; background: linear-gradient(90deg, #a3c1f1, #b4cdf5 60%, #c3d7f8); border-left: 2px solid #8fb0e0; }
			.bars { display: flex; flex-direction: column; gap: 1px; padding-top: 1px; }
			.bars > div { display: flex; gap: 2px; padding-left: 2px; height: 25px; }
			main { flex: 1; min-height: 0; display: grid; grid-template: minmax(0, 1fr) / minmax(0, 1fr) 279px; gap: 4px; background: #d5e3fb; border-left: 2px solid var(--edge); }
			.docs { min-height: 0; min-width: 0; display: flex; flex-direction: column; border-right: 1px solid var(--edge); }
			.tabs { display: flex; flex: none; align-items: flex-end; height: 21px; padding-left: 15px; background: var(--strip); }
			.arrows { margin: 0 10px 0 auto; align-self: center; display: flex; gap: 6px; }
			.arrows button { width: 7px; height: 16px; }
			.arrows svg { width: 7px; height: 9px; fill: none; stroke: #000; }
			report-viewer { flex: 1; min-height: 0; }
			aside { min-height: 0; display: grid; grid-template-rows: 424px minmax(0, 1fr) 23px; padding-bottom: 1px; }
			dock-panel + dock-panel { margin-top: 5px; }
			.add { display: flex; align-items: center; gap: 4px; padding: 0 9px 0 6px; height: 22px; border-right: 1px solid #6a8cc4; }
			.add::after { content: ""; border: 3px solid transparent; border-top-color: #000; border-bottom: 0; margin-left: 6px; }
			.panels { display: flex; background: var(--strip); border-top: 1px solid var(--dark); padding-left: 2px; }
			.panels button { display: flex; align-items: center; gap: 1px; padding: 0 5px 0 3px; border-right: 1px solid var(--edge); color: #0046c0; white-space: nowrap; }
			.panels .on { background: #eaf6fe; color: #000; border-right-color: var(--dark); }
		`
	}
	html() {
		return `
			<title-bar>Crystal Reports - [Report1]</title-bar>
			<div class="top">
				<menu-bar></menu-bar>
				<div class="bars">
					<div><tool-bar items="new open:wide v save | print preview htmlprev export | cut copy paste brush undo:wide -v redo:wide -v | tree:active table report globe check favreport | binoc | ZOOM | help"></tool-bar></div>
					<div><tool-bar items="FONT grow shrink | bold italic under | left center right justify | fontcolor -v box:wide -v suppress lockformat locksize | currency thousands percent moredec lessdec"></tool-bar></div>
					<div>
						<tool-bar items="textobj group sigma crosstab olap subreport line boxpen picture chart map"></tool-bar>
						<tool-bar items="dblink section | trend sort groupsort | template formula folderup arrowbox | handdoc weblink dotsel"></tool-bar>
						<tool-bar items="refresh stop first prev next last | back forward"></tool-bar>
					</div>
				</div>
			</div>
			<main>
				<div class="docs">
					<div class="tabs">
						<doc-tab>Start Page</doc-tab><doc-tab selected>Report1</doc-tab>
						<div class="arrows">
							<button aria-label="Scroll left"><svg viewBox="0 0 7 9"><path d="M5.500 1v7L1.500 4.500z"/></svg></button>
							<button aria-label="Scroll right"><svg viewBox="0 0 7 9"><path d="M1.500 1v7l4-3.500z"/></svg></button>
						</div>
					</div>
					<report-viewer></report-viewer>
				</div>
				<aside>
					<dock-panel heading="Workbench">
						<button slot="tools" class="add"><report-icon name="add"></report-icon>Add</button>
						<tool-bar slot="tools" flat items="newitem checkgray"></tool-bar>
						<field-node icon="favreport" selected bare>&lt;Create a new project&gt;</field-node>
					</dock-panel>
					<dock-panel heading="Field Explorer" inset>
						<tool-bar slot="tools" flat items="insfield browse | newfield edit rename delete"></tool-bar>
						<field-node icon="database" plus selected>Database Fields</field-node>
						<field-node icon="formula">Formula Fields</field-node>
						<field-node icon="param">Parameter Fields</field-node>
						<field-node icon="runtotal">Running Total Fields</field-node>
						<field-node icon="groupname" plus>Group Name Fields</field-node>
						<field-node icon="special" plus>Special Fields</field-node>
					</dock-panel>
					<div class="panels">
						<button class="on"><report-icon name="table"></report-icon>Field Explorer</button>
						<button><report-icon name="report"></report-icon>Report Explorer</button>
					</div>
				</aside>
			</main>
			<status-bar></status-bar>`
	}
}

customElements.define('report-icon', ReportIcon)
customElements.define('title-bar', TitleBar)
customElements.define('menu-bar', MenuBar)
customElements.define('drop-box', DropBox)
customElements.define('tool-bar', ToolBar)
customElements.define('doc-tab', DocTab)
customElements.define('scroll-bar', ScrollBar)
customElements.define('group-tree', GroupTree)
customElements.define('ruler-bar', RulerBar)
customElements.define('section-list', SectionList)
customElements.define('usage-chart', UsageChart)
customElements.define('report-group', ReportGroup)
customElements.define('report-page', ReportPage)
customElements.define('report-viewer', ReportViewer)
customElements.define('dock-panel', DockPanel)
customElements.define('field-node', FieldNode)
customElements.define('status-bar', StatusBar)
customElements.define('report-app', ReportApp)
</script>
</body>
</html>
